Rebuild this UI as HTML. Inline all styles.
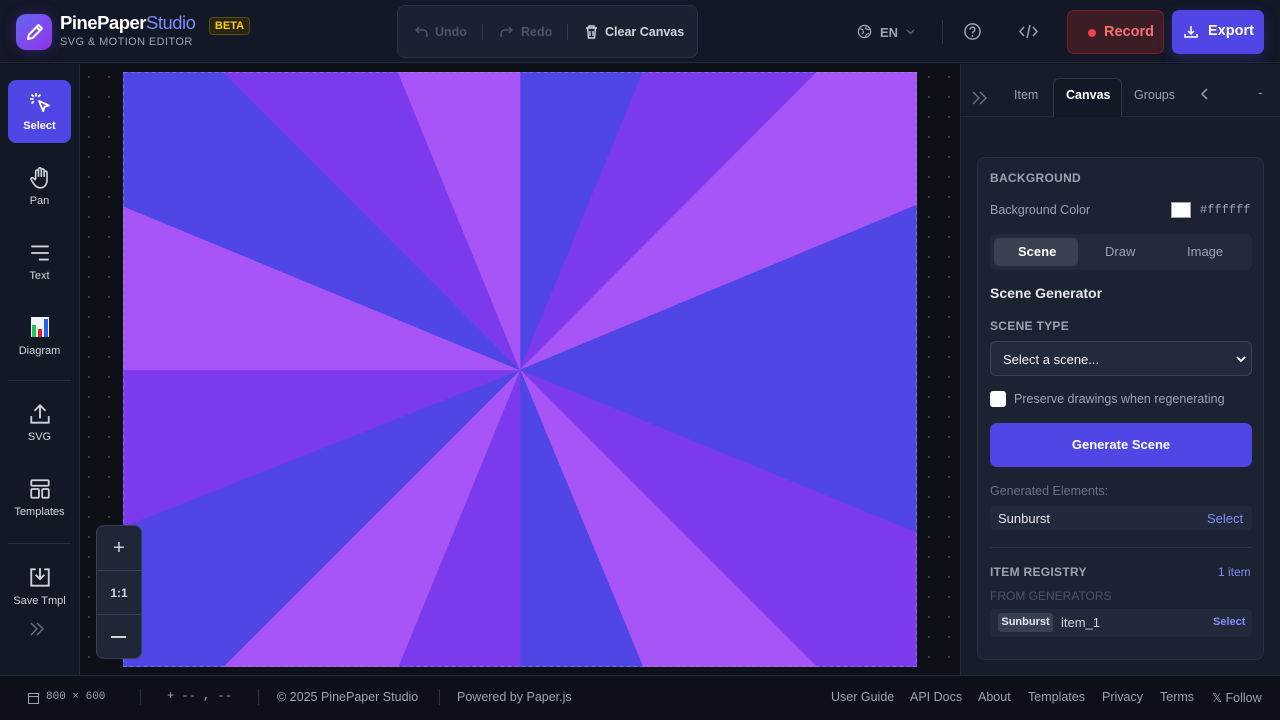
<!DOCTYPE html>
<html><head><meta charset="utf-8"><style>
*{box-sizing:border-box;margin:0;padding:0}
body{width:1280px;height:720px;overflow:hidden;background:#0d1117;font-family:"Liberation Sans",sans-serif;color:#e5e7eb;position:relative}
.abs{position:absolute}
#top{left:0;top:0;width:1280px;height:63px;background:#121826;border-bottom:1px solid #232b3a}
#left{left:0;top:64px;width:80px;height:611px;background:#121826;border-right:1px solid #232b3a}
#canvasArea{left:80px;top:64px;width:880px;height:611px;background-color:#0d1117;background-image:radial-gradient(circle,#3a4150 1px,transparent 1.3px);background-size:20px 20px;background-position:-1px 3px}
#right{left:960px;top:64px;width:320px;height:611px;background:#151d2b;border-left:1px solid #232b3a}
#foot{left:0;top:675px;width:1280px;height:45px;background:#0d1018;border-top:1px solid #232b3a;font-size:12.5px;color:#9ca3af}
.tool{position:absolute;left:8px;width:63px;text-align:center;font-size:11px;color:#d1d5db}
.tool svg{display:block;margin:0 auto 5px}
.card{left:977px;top:157px;width:287px;height:503px;background:#1b2332;border:1px solid #263042;border-radius:8px}
.lbl{font-size:12px;font-weight:bold;color:#9ca3af;letter-spacing:.3px}
</style></head><body>
<div id="top" class="abs">
 <div class="abs" style="left:16px;top:14px;width:36px;height:36px;border-radius:10px;background:linear-gradient(135deg,#6366f1,#9333ea);box-shadow:0 0 14px rgba(124,58,237,.35)">
  <svg width="36" height="36" viewBox="0 0 36 36"><path d="M12 25l1-4.5 9.5-9.5 3.5 3.5-9.5 9.5-4.5 1zM20.5 13l3.5 3.5" fill="none" stroke="#fff" stroke-width="2" stroke-linejoin="round"/></svg></div>
 <div class="abs" style="left:60px;top:12px;font-size:18.5px;font-weight:bold;color:#fff;letter-spacing:-.5px">PinePaper<span style="font-weight:normal;color:#818cf8">Studio</span></div>
 <div class="abs" style="left:209px;top:17px;width:41px;height:18px;border:1px solid #5b4b17;background:#2a2612;border-radius:4px;color:#facc15;font-size:11px;font-weight:bold;text-align:center;line-height:16px">BETA</div>
 <div class="abs" style="left:60px;top:36px;font-size:11px;color:#9ca3af;letter-spacing:.4px">SVG &amp; MOTION EDITOR</div>
 <div class="abs" style="left:397px;top:5px;width:301px;height:53px;background:#1a2130;border:1px solid #2a3242;border-radius:8px;font-size:12.5px">
  <svg class="abs" style="left:16px;top:18px" width="16" height="16" viewBox="0 0 16 16"><path d="M5 3L2 6l3 3M2 6h7a4 4 0 014 4v3" fill="none" stroke="#4b5563" stroke-width="1.4"/></svg>
  <span class="abs" style="left:37px;top:19px;color:#4b5563;font-weight:bold">Undo</span>
  <div class="abs" style="left:84px;top:18px;width:1px;height:16px;background:#333b4a"></div>
  <svg class="abs" style="left:100px;top:18px" width="16" height="16" viewBox="0 0 16 16"><path d="M11 3l3 3-3 3M14 6H7a4 4 0 00-4 4v3" fill="none" stroke="#4b5563" stroke-width="1.4"/></svg>
  <span class="abs" style="left:123px;top:19px;color:#4b5563;font-weight:bold">Redo</span>
  <div class="abs" style="left:169px;top:18px;width:1px;height:16px;background:#333b4a"></div>
  <svg class="abs" style="left:186px;top:18px" width="15" height="16" viewBox="0 0 15 16"><path d="M2 4h11M5 4V2h5v2M3.5 4l1 10h6l1-10M6 7v5M9 7v5" fill="none" stroke="#d1d5db" stroke-width="1.4"/></svg>
  <span class="abs" style="left:207px;top:19px;color:#d1d5db;font-weight:bold">Clear Canvas</span>
 </div>
 <svg class="abs" style="left:857px;top:24px" width="15" height="15" viewBox="0 0 16 16"><circle cx="8" cy="8" r="6.5" fill="none" stroke="#9ca3af" stroke-width="1.4"/><path d="M3 5l3 1 1 3-2 2M10 2l-1 3 3 1 2-1M9 14l1-3 3-1" fill="none" stroke="#9ca3af" stroke-width="1.2"/></svg>
 <span class="abs" style="left:880px;top:25px;font-size:13px;font-weight:bold;color:#9ca3af">EN</span>
 <svg class="abs" style="left:906px;top:29px" width="9" height="6" viewBox="0 0 9 6"><path d="M1 1l3.5 3.5L8 1" fill="none" stroke="#6b7280" stroke-width="1.2"/></svg>
 <div class="abs" style="left:942px;top:20px;width:1px;height:24px;background:#2a3242"></div>
 <svg class="abs" style="left:963px;top:22px" width="19" height="19" viewBox="0 0 20 20"><circle cx="10" cy="10" r="8" fill="none" stroke="#9ca3af" stroke-width="1.6"/><path d="M7.5 8a2.5 2.5 0 015 0c0 2-2.5 2-2.5 4" fill="none" stroke="#9ca3af" stroke-width="1.6"/><circle cx="10" cy="14.6" r="1" fill="#9ca3af"/></svg>
 <svg class="abs" style="left:1018px;top:23px" width="21" height="17" viewBox="0 0 21 17"><path d="M6 4L2 8.5 6 13M15 4l4 4.5-4 4.5M12 2L9 15" fill="none" stroke="#9ca3af" stroke-width="1.5"/></svg>
 <div class="abs" style="left:1067px;top:10px;width:97px;height:44px;background:#3b1d26;border:1px solid #7f1d1d;border-radius:7px;color:#f87171;font-size:14.5px;font-weight:bold">
  <div class="abs" style="left:20px;top:18px;width:8px;height:8px;border-radius:50%;background:#ef4444"></div><span class="abs" style="left:36px;top:13px">Record</span></div>
 <div class="abs" style="left:1172px;top:10px;width:92px;height:44px;background:#4f46e5;border-radius:7px;color:#fff;font-size:14.5px;font-weight:bold;box-shadow:0 4px 14px rgba(79,70,229,.3)">
  <svg class="abs" style="left:12px;top:15px" width="14" height="14" viewBox="0 0 14 14"><path d="M7 1v8M4 6l3 3 3-3M1 9v3h12V9" fill="none" stroke="#fff" stroke-width="1.6"/></svg><span class="abs" style="left:36px;top:13px">Export</span></div>
</div>

<div id="left" class="abs">
 <div class="abs" style="left:8px;top:16px;width:63px;height:63px;background:#4f46e5;border-radius:8px"></div>
 <div class="tool" style="top:27px;color:#fff;font-weight:bold"><svg width="24" height="24" viewBox="0 0 24 24"><path d="M11 10l10 4.5-4.5 1.2-1.3 4.5z" fill="none" stroke="#fff" stroke-width="1.8" stroke-linejoin="round"/><path d="M8 2v3.5M2 8h3.5M3.5 3.5l2.3 2.3M12.5 3.5l-2.3 2.3M3.5 12.5l2.3-2.3" stroke="#fff" stroke-width="1.8"/></svg>Select</div>
 <div class="tool" style="top:102px"><svg width="22" height="24" viewBox="0 0 20 22"><path d="M6 12V5a1.3 1.3 0 012.6 0v5V3a1.3 1.3 0 012.6 0v7V4a1.3 1.3 0 012.6 0v6V6a1.3 1.3 0 012.6 0v7c0 4-2.5 7-6 7s-5-2-7-5l-1.5-2.5a1.2 1.2 0 012-1.3L6 13" fill="none" stroke="#d1d5db" stroke-width="1.5"/></svg>Pan</div>
 <div class="tool" style="top:177px"><svg width="22" height="24" viewBox="0 0 20 22"><path d="M2 5h16M2 11h16M9 17h9" stroke="#d1d5db" stroke-width="1.7"/></svg>Text</div>
 <div class="tool" style="top:250px"><svg width="20" height="26" viewBox="0 0 20 24"><rect x="1" y="2" width="18" height="20" fill="#f3f4f6"/><rect x="2" y="10" width="4" height="12" fill="#22c55e"/><rect x="8" y="14" width="4" height="8" fill="#dc2626"/><rect x="14" y="4" width="4" height="18" fill="#2563eb"/></svg>Diagram</div>
 <div class="abs" style="left:8px;top:316px;width:63px;height:1px;background:#2a3242"></div>
 <div class="tool" style="top:338px"><svg width="22" height="24" viewBox="0 0 20 22"><path d="M10 15V3M5 8l5-5 5 5M2 13v6h16v-6" fill="none" stroke="#d1d5db" stroke-width="1.7"/></svg>SVG</div>
 <div class="tool" style="top:413px"><svg width="22" height="24" viewBox="0 0 20 22"><rect x="2" y="3" width="16" height="5" rx="1" fill="none" stroke="#d1d5db" stroke-width="1.6"/><rect x="2" y="11" width="7" height="8" rx="1" fill="none" stroke="#d1d5db" stroke-width="1.6"/><rect x="12" y="11" width="6" height="8" rx="1" fill="none" stroke="#d1d5db" stroke-width="1.6"/></svg>Templates</div>
 <div class="abs" style="left:8px;top:479px;width:63px;height:1px;background:#2a3242"></div>
 <div class="tool" style="top:502px"><svg width="22" height="24" viewBox="0 0 20 22"><path d="M6 3H2v15h16V3h-4M10 2v10M6 8l4 4 4-4" fill="none" stroke="#d1d5db" stroke-width="1.7"/></svg>Save Tmpl</div>
 <svg class="abs" style="left:29px;top:557px" width="16" height="16" viewBox="0 0 16 16"><path d="M2 2l6 6-6 6M8 2l6 6-6 6" fill="none" stroke="#6b7280" stroke-width="1.4"/></svg>
</div>

<div id="canvasArea" class="abs"></div>
<svg class="abs" style="left:123px;top:72px" width="794" height="595" viewBox="123 72 794 595">
 <g stroke-width="0.6">
 <polygon points="520,370 520,72 643,72" fill="#4f46e5" stroke="#4f46e5"/>
 <polygon points="520,370 643,72 817,72" fill="#7c3aed" stroke="#7c3aed"/>
 <polygon points="520,370 817,72 917,72 917,205" fill="#a855f7" stroke="#a855f7"/>
 <polygon points="520,370 917,205 917,533" fill="#4f46e5" stroke="#4f46e5"/>
 <polygon points="520,370 917,533 917,667 817,667" fill="#7c3aed" stroke="#7c3aed"/>
 <polygon points="520,370 817,667 643,667" fill="#a855f7" stroke="#a855f7"/>
 <polygon points="520,370 643,667 520,667" fill="#4f46e5" stroke="#4f46e5"/>
 <polygon points="520,370 520,667 398,667" fill="#7c3aed" stroke="#7c3aed"/>
 <polygon points="520,370 398,667 223,667" fill="#a855f7" stroke="#a855f7"/>
 <polygon points="520,370 223,667 123,667 123,527" fill="#4f46e5" stroke="#4f46e5"/>
 <polygon points="520,370 123,527 123,370" fill="#7c3aed" stroke="#7c3aed"/>
 <polygon points="520,370 123,370 123,206" fill="#a855f7" stroke="#a855f7"/>
 <polygon points="520,370 123,206 123,72 223,72" fill="#4f46e5" stroke="#4f46e5"/>
 <polygon points="520,370 223,72 398,72" fill="#7c3aed" stroke="#7c3aed"/>
 <polygon points="520,370 398,72 520,72" fill="#a855f7" stroke="#a855f7"/>
 </g>
 <rect x="123.5" y="72.5" width="793" height="594" fill="none" stroke="#8b8fd8" stroke-width="1" stroke-dasharray="4 3" opacity=".6"/>
</svg>
<div class="abs" style="left:96px;top:525px;width:46px;height:134px;background:#1f2737;border:1px solid #374151;border-radius:8px;color:#d1d5db">
 <div class="abs" style="left:0;top:0;width:44px;height:44px;text-align:center;line-height:44px;font-size:20px">+</div>
 <div class="abs" style="left:0;top:44px;width:44px;height:1px;background:#374151"></div>
 <div class="abs" style="left:0;top:45px;width:44px;height:44px;text-align:center;line-height:44px;font-size:12px;font-weight:bold">1:1</div>
 <div class="abs" style="left:0;top:88px;width:44px;height:1px;background:#374151"></div>
 <div class="abs" style="left:14px;top:110px;width:15px;height:1.6px;background:#d1d5db"></div>
</div>

<div id="right" class="abs">
 <div class="abs" style="left:0;top:52px;width:320px;height:1px;background:#232b3a"></div>
 <svg class="abs" style="left:10px;top:26px" width="18" height="16" viewBox="0 0 18 16"><path d="M2 2l6 6-6 6M9 2l6 6-6 6" fill="none" stroke="#6b7280" stroke-width="1.4"/></svg>
 <span class="abs" style="left:53px;top:24px;font-size:12.5px;color:#9ca3af">Item</span>
 <div class="abs" style="left:92px;top:14px;width:69px;height:39px;background:#121826;border:1px solid #2f3848;border-bottom:none;border-radius:6px 6px 0 0"></div>
 <span class="abs" style="left:105px;top:24px;font-size:12.5px;color:#fff;font-weight:bold">Canvas</span>
 <span class="abs" style="left:173px;top:24px;font-size:12.5px;color:#9ca3af">Groups</span>
 <svg class="abs" style="left:240px;top:24px" width="8" height="12" viewBox="0 0 8 12"><path d="M6 1L1 6l5 5" fill="none" stroke="#9ca3af" stroke-width="1.5"/></svg>
 <span class="abs" style="left:297px;top:21px;font-size:13px;color:#9ca3af">-</span>
</div>
<div class="abs card">
 <div class="abs lbl" style="left:12px;top:13px">BACKGROUND</div>
 <div class="abs" style="left:12px;top:45px;font-size:12.5px;color:#9ca3af">Background Color</div>
 <div class="abs" style="left:193px;top:44px;width:20px;height:16px;background:#fff;border:1px solid #9ca3af"></div>
 <div class="abs" style="left:222px;top:45px;font-family:'Liberation Mono',monospace;font-size:12px;color:#9ca3af">#ffffff</div>
 <div class="abs" style="left:12px;top:76px;width:262px;height:36px;background:#222b3b;border-radius:6px">
  <div class="abs" style="left:4px;top:4px;width:84px;height:28px;background:#374151;border-radius:5px"></div>
  <span class="abs" style="left:28px;top:10px;font-size:13px;font-weight:bold;color:#fff">Scene</span>
  <span class="abs" style="left:115px;top:10px;font-size:13px;color:#9ca3af">Draw</span>
  <span class="abs" style="left:197px;top:10px;font-size:13px;color:#9ca3af">Image</span>
 </div>
 <div class="abs" style="left:12px;top:127px;font-size:14px;font-weight:bold;color:#e5e7eb">Scene Generator</div>
 <div class="abs lbl" style="left:12px;top:161px">SCENE TYPE</div>
 <div class="abs" style="left:12px;top:183px;width:262px;height:35px;background:#222b3b;border:1px solid #3a4354;border-radius:6px">
  <span class="abs" style="left:12px;top:10px;font-size:13px;color:#f3f4f6">Select a scene...</span>
  <svg class="abs" style="left:245px;top:13px" width="10" height="8" viewBox="0 0 10 8"><path d="M1 2l4 4 4-4" fill="none" stroke="#fff" stroke-width="1.8"/></svg>
 </div>
 <div class="abs" style="left:12px;top:233px;width:16px;height:16px;background:#fff;border-radius:3px"></div>
 <div class="abs" style="left:36px;top:234px;font-size:12.5px;color:#9ca3af">Preserve drawings when regenerating</div>
 <div class="abs" style="left:12px;top:265px;width:262px;height:44px;background:#4f46e5;border-radius:7px;color:#fff;font-size:13px;font-weight:bold;text-align:center;line-height:44px">Generate Scene</div>
 <div class="abs" style="left:12px;top:326px;font-size:12.5px;color:#6b7280">Generated Elements:</div>
 <div class="abs" style="left:12px;top:348px;width:262px;height:24px;background:#212a3a;border-radius:4px">
  <span class="abs" style="left:8px;top:5px;font-size:13px;color:#e5e7eb">Sunburst</span>
  <span class="abs" style="left:217px;top:5px;font-size:13px;color:#818cf8">Select</span></div>
 <div class="abs" style="left:12px;top:389px;width:262px;height:1px;background:#2a3342"></div>
 <div class="abs lbl" style="left:12px;top:407px">ITEM REGISTRY</div>
 <span class="abs" style="left:240px;top:407px;font-size:12px;color:#818cf8">1 item</span>
 <div class="abs" style="left:12px;top:431px;font-size:12px;color:#4b5563">FROM GENERATORS</div>
 <div class="abs" style="left:12px;top:451px;width:262px;height:28px;background:#212a3a;border-radius:4px">
  <div class="abs" style="left:8px;top:4px;width:55px;height:19px;background:#374151;border-radius:3px;font-size:11px;font-weight:bold;color:#e5e7eb;text-align:center;line-height:19px">Sunburst</div>
  <span class="abs" style="left:71px;top:6px;font-size:13px;color:#d1d5db">item_1</span>
  <span class="abs" style="left:223px;top:7px;font-size:11px;font-weight:bold;color:#818cf8">Select</span></div>
</div>

<div id="foot" class="abs">
 <svg class="abs" style="left:28px;top:17px" width="11" height="11" viewBox="0 0 11 11"><rect x=".5" y=".5" width="10" height="10" fill="none" stroke="#9ca3af"/><path d="M.5 3.5h10" stroke="#9ca3af"/></svg>
 <span class="abs" style="left:46px;top:15px;font-family:'Liberation Mono',monospace;font-size:11px">800 × 600</span>
 <div class="abs" style="left:140px;top:13px;width:1px;height:16px;background:#2a3242"></div>
 <span class="abs" style="left:167px;top:13px;font-family:'Liberation Mono',monospace;font-size:12px">+ -- , --</span>
 <div class="abs" style="left:258px;top:13px;width:1px;height:16px;background:#2a3242"></div>
 <span class="abs" style="left:277px;top:14px">© 2025 PinePaper Studio</span>
 <div class="abs" style="left:439px;top:13px;width:1px;height:16px;background:#2a3242"></div>
 <span class="abs" style="left:457px;top:14px">Powered by Paper.js</span>
 <span class="abs" style="left:831px;top:14px">User Guide</span>
 <span class="abs" style="left:910px;top:14px">API Docs</span>
 <span class="abs" style="left:978px;top:14px">About</span>
 <span class="abs" style="left:1028px;top:14px">Templates</span>
 <span class="abs" style="left:1102px;top:14px">Privacy</span>
 <span class="abs" style="left:1160px;top:14px">Terms</span>
 <span class="abs" style="left:1212px;top:14px">𝕏 Follow</span>
</div>
</body></html>
